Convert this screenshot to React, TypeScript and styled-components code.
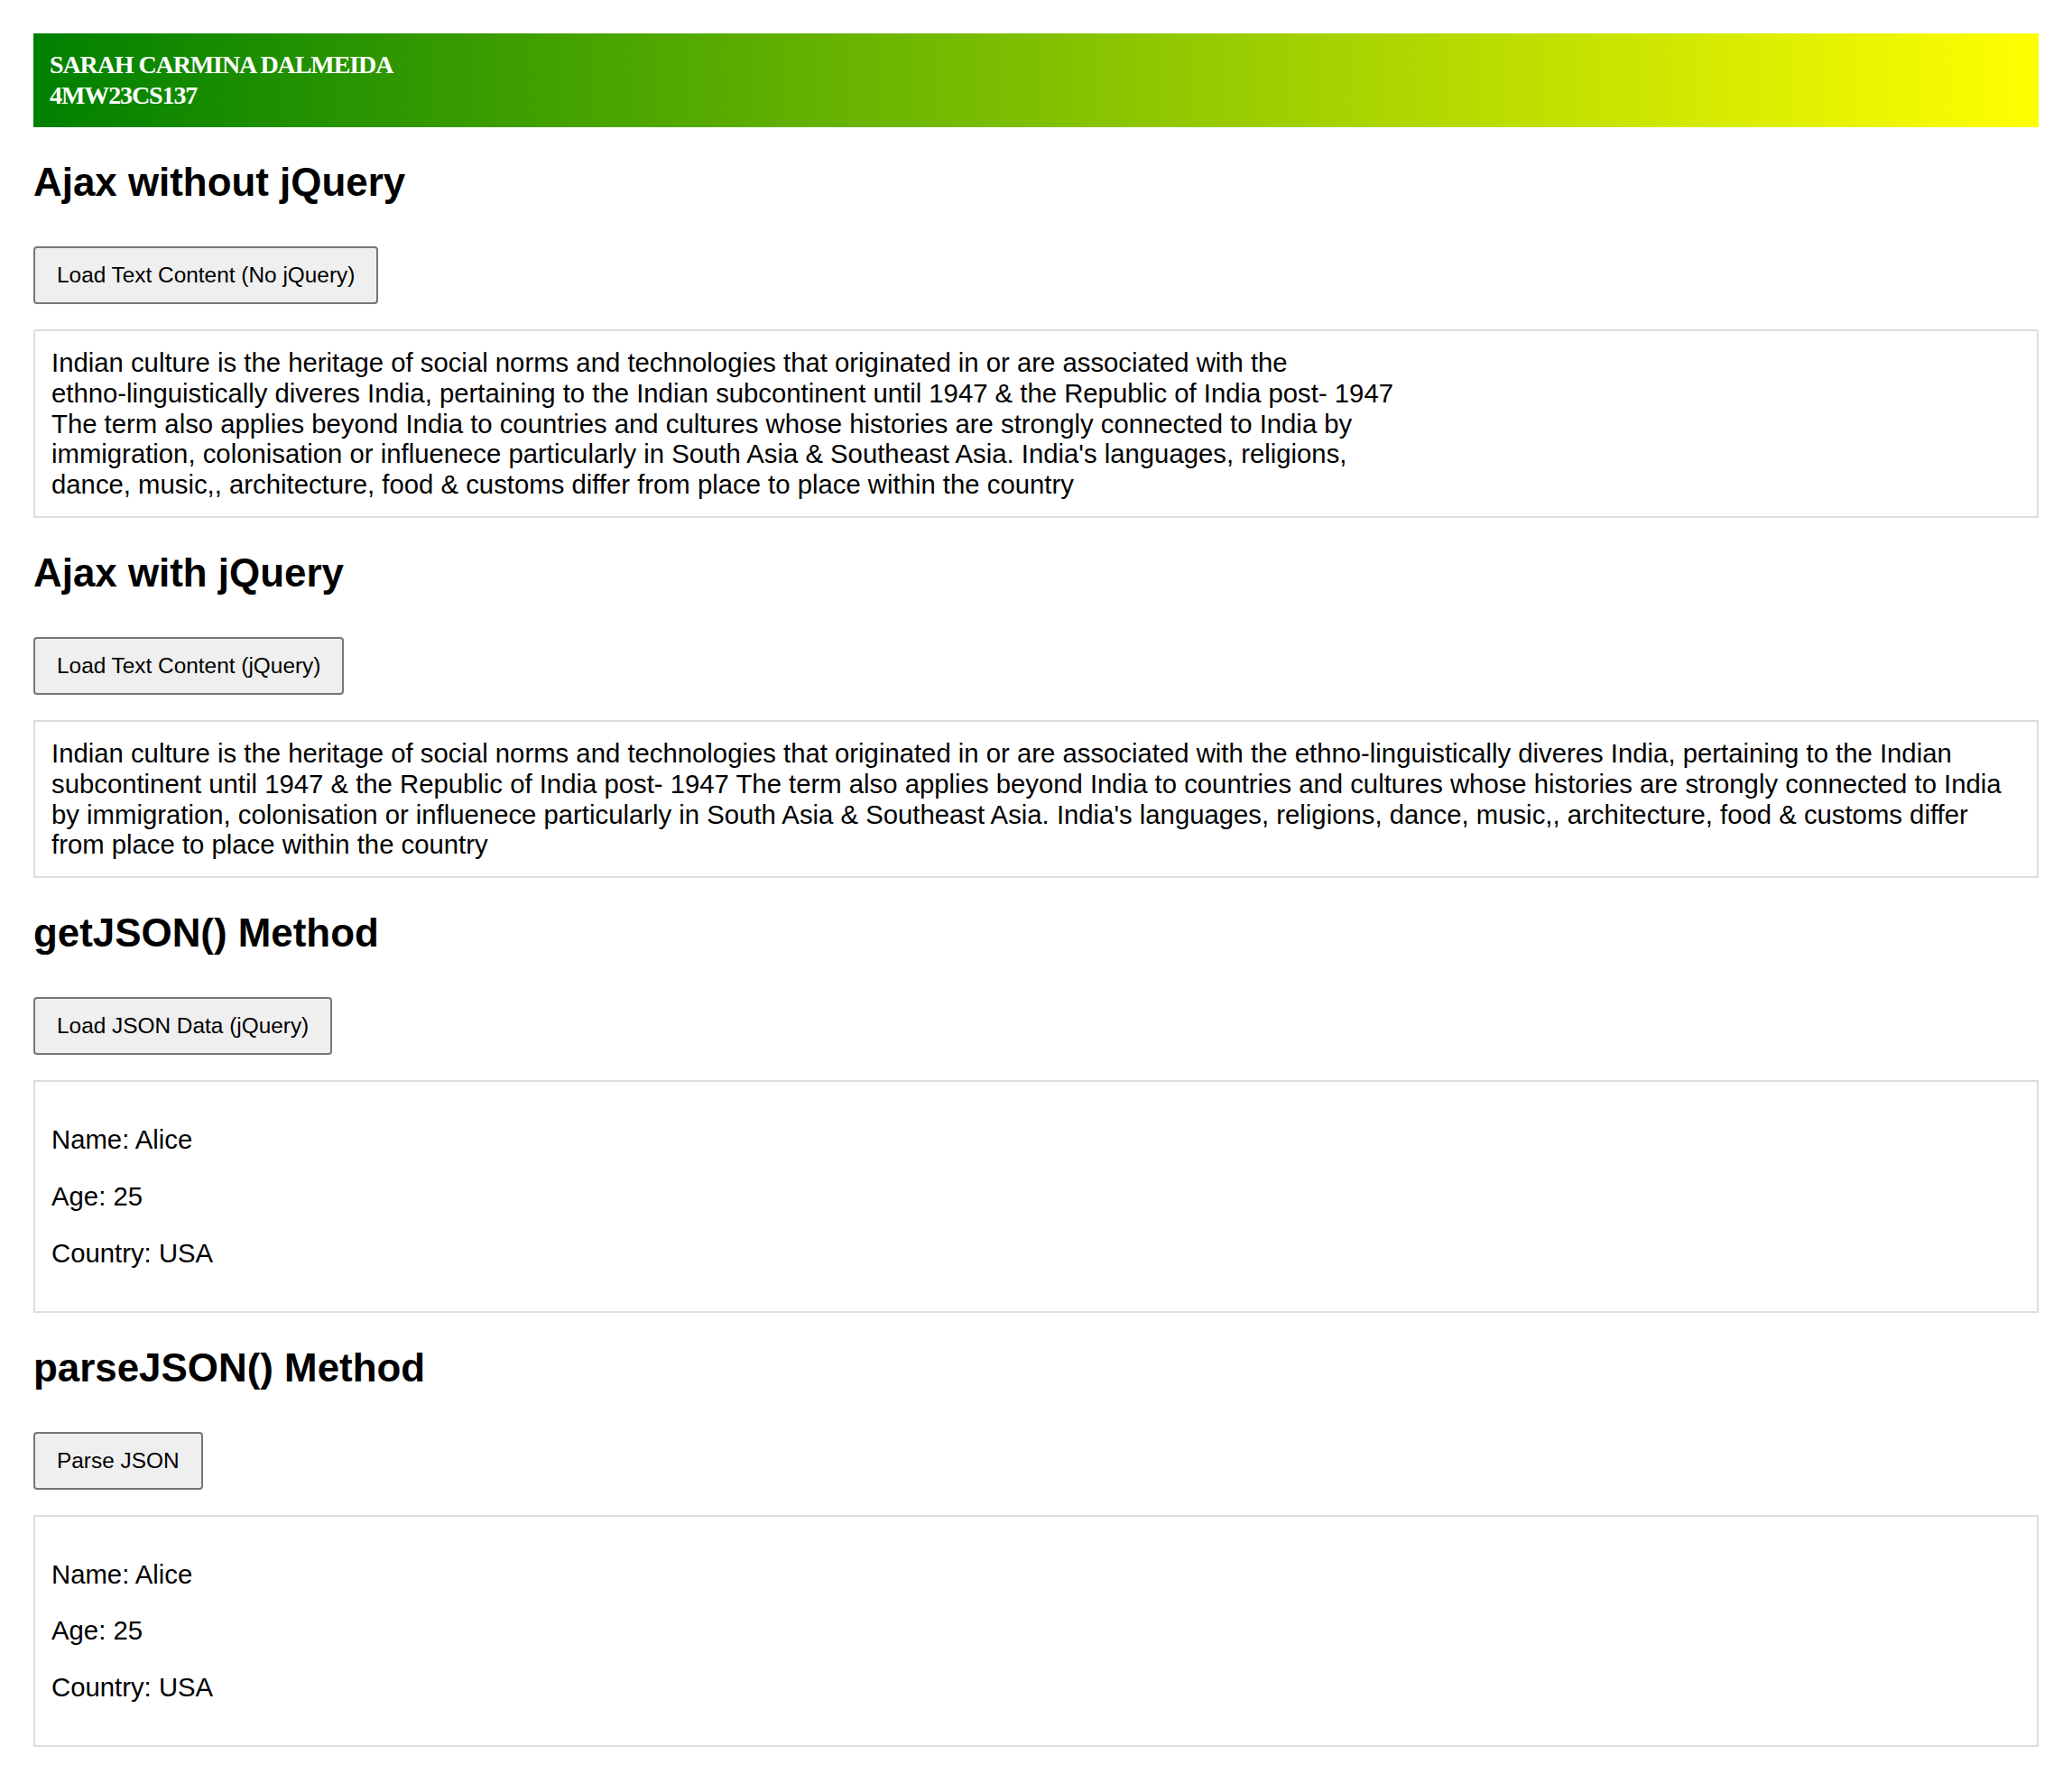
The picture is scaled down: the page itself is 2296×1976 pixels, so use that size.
import React from "react";
import styled, { createGlobalStyle } from "styled-components";

const GlobalStyle = createGlobalStyle`
  html, body {
    margin: 0;
    padding: 0;
    background: #ffffff;
  }
  body {
    font-family: "Liberation Sans", Arial, sans-serif;
    font-size: 29.3px;
    line-height: 33.8px;
    color: #000000;
  }
`;

const Page = styled.div`
  padding: 37px 37px 40px;
  display: flex;
  flex-direction: column;
`;

const Banner = styled.header`
  background: linear-gradient(to right, #008000, #ffff00);
  padding: 18px 18px;
  color: #ffffff;
  font-family: "Liberation Serif", "Times New Roman", serif;
  font-weight: 700;
  font-size: 28px;
  letter-spacing: -1.1px;
  line-height: 34px;
`;

const BannerLine = styled.div``;

const Heading = styled.h2`
  font-family: "Liberation Sans", Arial, sans-serif;
  font-size: 43.9px;
  font-weight: 700;
  margin: 36px 0 36px;
  line-height: 50px;
`;

const LoadButton = styled.button`
  align-self: flex-start;
  margin-top: 10px;
  font-family: "Liberation Sans", Arial, sans-serif;
  font-size: 24.4px;
  line-height: 28px;
  color: #000000;
  background: #efefef;
  border: 2px solid #767676;
  border-radius: 4px;
  padding: 16px 24px;
  cursor: pointer;
`;

const OutputBox = styled.div<{ $pre?: boolean }>`
  margin-top: 28px;
  border: 2px solid #dedede;
  padding: 18px;
  white-space: ${(p) => (p.$pre ? "pre-line" : "normal")};
`;

const Field = styled.p`
  margin: 29px 0;
`;

const preText = `Indian culture is the heritage of social norms and technologies that originated in or are associated with the
ethno-linguistically diveres India, pertaining to the Indian subcontinent until 1947 & the Republic of India post- 1947
The term also applies beyond India to countries and cultures whose histories are strongly connected to India by
immigration, colonisation or influenece particularly in South Asia & Southeast Asia. India's languages, religions,
dance, music,, architecture, food & customs differ from place to place within the country`;

const flowText =
  "Indian culture is the heritage of social norms and technologies that originated in or are associated with the ethno-linguistically diveres India, pertaining to the Indian subcontinent until 1947 & the Republic of India post- 1947 The term also applies beyond India to countries and cultures whose histories are strongly connected to India by immigration, colonisation or influenece particularly in South Asia & Southeast Asia. India's languages, religions, dance, music,, architecture, food & customs differ from place to place within the country";

const person = { name: "Alice", age: 25, country: "USA" };

const PersonInfo: React.FC = () => (
  <OutputBox>
    <Field>Name: {person.name}</Field>
    <Field>Age: {person.age}</Field>
    <Field>Country: {person.country}</Field>
  </OutputBox>
);

export default function App() {
  return (
    <>
      <GlobalStyle />
      <Page>
        <Banner>
          <BannerLine>SARAH CARMINA DALMEIDA</BannerLine>
          <BannerLine>4MW23CS137</BannerLine>
        </Banner>

        <Heading>Ajax without jQuery</Heading>
        <LoadButton>Load Text Content (No jQuery)</LoadButton>
        <OutputBox $pre>{preText}</OutputBox>

        <Heading>Ajax with jQuery</Heading>
        <LoadButton>Load Text Content (jQuery)</LoadButton>
        <OutputBox>{flowText}</OutputBox>

        <Heading>getJSON() Method</Heading>
        <LoadButton>Load JSON Data (jQuery)</LoadButton>
        <PersonInfo />

        <Heading>parseJSON() Method</Heading>
        <LoadButton>Parse JSON</LoadButton>
        <PersonInfo />
      </Page>
    </>
  );
}
